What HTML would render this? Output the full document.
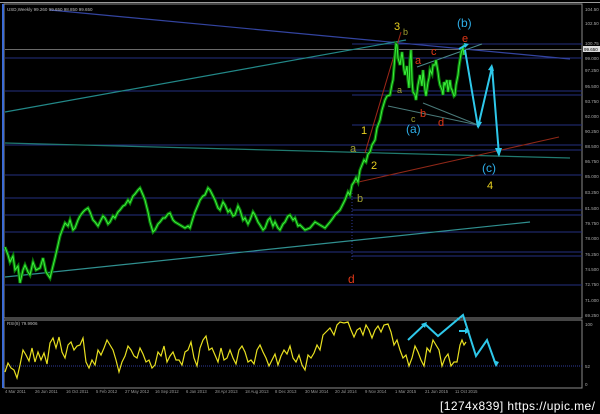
<!DOCTYPE html>
<html><head><meta charset="utf-8"><style>
html,body{margin:0;padding:0;background:#000;width:600px;height:414px;overflow:hidden}
svg{display:block}
text{font-family:"Liberation Sans",sans-serif}
</style></head><body>
<svg width="600" height="414" viewBox="0 0 600 414" xmlns="http://www.w3.org/2000/svg">
<defs>
<polyline id="px" fill="none" points="5,247 8,255 10,262 13,256 15,270 18,266 20,283 23,270 25,265 28,272 30,275 33,262 36,270 40,268 43,258 46,272 50,278 53,266 55,258 58,245 60,236 63,228 65,223 68,226 70,220 73,230 75,228 78,220 80,216 83,212 85,210 88,208 90,212 93,220 95,222 98,226 100,222 103,216 105,218 108,224 110,222 113,216 115,218 118,212 120,210 123,206 125,205 128,200 130,203 133,196 135,194 138,190 140,188 143,195 145,200 148,212 150,222 153,232 155,230 158,224 160,222 163,218 165,218 168,214 170,213 173,220 175,222 180,225 185,228 188,226 190,228 193,218 195,212 198,205 200,200 203,196 205,195 208,188 210,190 213,196 215,200 218,208 220,210 223,202 225,205 228,212 230,210 233,216 235,215 238,206 240,210 243,220 245,218 248,224 250,220 253,212 255,215 258,222 260,225 263,230 265,228 268,220 270,218 273,226 275,222 278,228 280,230 283,224 285,222 288,216 290,215 293,220 295,218 298,226 300,225 305,230 310,228 315,222 320,225 325,228 330,222 333,218 335,215 338,212 340,210 343,204 345,200 348,192 350,195 352,185 354,182 356,178 358,182 360,170 362,165 364,160 366,162 368,154 370,152 372,145 375,140 377,128 380,120 382,110 385,100 387,96 390,95 392,84 393,80 394,68 395,55 396,44 397,45 398,58 400,65 402,52 403,60 404,70 405,75 407,66 408,80 409,88 410,60 411,50 412,80 413,92 415,95 416,100 418,85 419,80 420,75 422,86 423,70 424,80 425,90 426,96 428,82 429,78 430,70 432,74 433,65 435,65 436,60 438,72 439,80 440,85 442,90 443,95 444,82 445,85 447,80 448,92 449,86 450,80 451,88 452,90 454,96 455,95 456,85 458,75 459,66 460,60 461,54 462,50 463,48 464,55"/>
</defs>
<rect width="600" height="414" fill="#000"/>
<rect x="4" y="4" width="578" height="314" fill="none" stroke="#8a8a8a" stroke-width="1"/>
<rect x="4" y="320" width="578" height="68" fill="none" stroke="#8a8a8a" stroke-width="1"/>
<line x1="3" y1="4" x2="3" y2="388" stroke="#3b6bd6" stroke-width="2"/>
<line x1="0" y1="2.5" x2="600" y2="2.5" stroke="#9a9a9a"/>
<g stroke="#252f80" stroke-width="1">
<line x1="352" y1="44" x2="582" y2="44"/>
<line x1="5" y1="58" x2="582" y2="58"/>
<line x1="5" y1="91" x2="582" y2="91"/>
<line x1="352" y1="95" x2="582" y2="95"/>
<line x1="352" y1="125" x2="582" y2="125"/>
<line x1="5" y1="145" x2="582" y2="145"/>
<line x1="352" y1="150" x2="582" y2="150"/>
<line x1="5" y1="175" x2="582" y2="175"/>
<line x1="5" y1="198" x2="582" y2="198"/>
<line x1="352" y1="210" x2="582" y2="210"/>
<line x1="5" y1="215" x2="582" y2="215"/>
<line x1="5" y1="232" x2="582" y2="232"/>
<line x1="5" y1="252" x2="582" y2="252"/>
<line x1="352" y1="256" x2="582" y2="256"/>
<line x1="5" y1="285" x2="582" y2="285"/>
</g>
<line x1="5" y1="49.5" x2="582" y2="49.5" stroke="#6a6a6a" stroke-width="1"/>
<line x1="352" y1="190" x2="352" y2="260" stroke="#2f3c9a" stroke-dasharray="1,2"/>
<line x1="50" y1="10" x2="570" y2="59" stroke="#3344a0" stroke-width="1.2"/>
<line x1="5" y1="112" x2="406" y2="40" stroke="#228888" stroke-width="1.2"/>
<line x1="5" y1="143" x2="570" y2="158" stroke="#207a70" stroke-width="1.2"/>
<line x1="5" y1="277" x2="530" y2="222" stroke="#309090" stroke-width="1.2"/>
<line x1="365" y1="153" x2="401" y2="32" stroke="#a02818" stroke-width="1"/>
<line x1="354" y1="183" x2="559" y2="137" stroke="#902818" stroke-width="1"/>
<line x1="388" y1="106" x2="478" y2="125" stroke="#4a7a7a" stroke-width="1"/>
<line x1="423" y1="103" x2="478" y2="125" stroke="#4a7a7a" stroke-width="1"/>
<line x1="417" y1="67" x2="482" y2="44" stroke="#4a8a8a" stroke-width="1"/>
<use href="#px" stroke="#0a7a0a" stroke-width="3.2"/>
<use href="#px" stroke="#3cf03c" stroke-width="1"/>
<polyline fill="none" stroke="#2ec8ea" stroke-width="2" points="465,50 478,127 492,67 499,155"/>
<polygon points="476,121 478,129 482,122" fill="#2ec8ea"/>
<polygon points="488,70 492,64 494,71" fill="#2ec8ea"/>
<polygon points="495,148 499,157 502,148" fill="#2ec8ea"/>
<line x1="459" y1="49" x2="466" y2="45" stroke="#2ec8ea" stroke-width="2"/>
<polygon points="464,43 469,44 465,48" fill="#2ec8ea"/>
<g font-size="11">
<text x="394" y="30" fill="#e8d020">3</text>
<text x="403" y="35" fill="#a0a030" font-size="9">b</text>
<text x="415" y="64" fill="#e03818">a</text>
<text x="431" y="55" fill="#e03818">c</text>
<text x="462" y="42" fill="#e03818">e</text>
<text x="457" y="27" fill="#2eaee8" font-size="12">(b)</text>
<text x="397" y="93" fill="#a0a030" font-size="9">a</text>
<text x="411" y="122" fill="#a0a030" font-size="9">c</text>
<text x="420" y="117" fill="#e03818">b</text>
<text x="438" y="126" fill="#e03818">d</text>
<text x="406" y="133" fill="#2eaee8" font-size="12">(a)</text>
<text x="361" y="134" fill="#e8d020">1</text>
<text x="350" y="152" fill="#a0a030">a</text>
<text x="371" y="169" fill="#e8d020">2</text>
<text x="482" y="172" fill="#2eaee8" font-size="12">(c)</text>
<text x="487" y="189" fill="#e8d020">4</text>
<text x="357" y="202" fill="#a0a030">b</text>
<text x="348" y="283" fill="#e03818" font-size="12">d</text>
</g>
<text x="7" y="11" fill="#bbb" font-size="4.5">USD,Weekly  99.260 99.650 98.850 99.650</text>
<g fill="#aaa" font-size="4.5">
<text x="585" y="11">104.50</text><text x="585" y="25">102.50</text><text x="585" y="45">100.75</text>
<text x="585" y="60">99.000</text><text x="585" y="72">97.250</text><text x="585" y="88">95.500</text>
<text x="585" y="103">93.750</text><text x="585" y="118">92.000</text><text x="585" y="133">90.250</text>
<text x="585" y="148">88.500</text><text x="585" y="163">86.750</text><text x="585" y="178">85.000</text>
<text x="585" y="194">83.250</text><text x="585" y="210">81.500</text><text x="585" y="225">79.750</text>
<text x="585" y="240">78.000</text><text x="585" y="256">76.250</text><text x="585" y="271">74.500</text>
<text x="585" y="286">72.750</text><text x="585" y="302">71.000</text><text x="585" y="317">69.250</text>
<text x="585" y="326">100</text><text x="585" y="368">52</text><text x="585" y="386">0</text>
</g>
<rect x="583" y="46" width="17" height="6" fill="#ddd"/>
<text x="584" y="51" fill="#000" font-size="4.5">99.650</text>
<text x="7" y="325" fill="#bbb" font-size="4.5">RSI(8) 79.9906</text>
<line x1="5" y1="366" x2="582" y2="366" stroke="#2f3c9a" stroke-dasharray="1,1"/>
<polyline fill="none" stroke="#e8e020" stroke-width="1.2" points="5,372 8,363 11,368 14,370 17,378 20,365 23,350 26,355 29,361 32,348 35,362 38,352 41,360 44,353 47,364 50,343 53,338 56,348 59,337 62,352 65,358 68,345 71,342 74,350 77,346 80,345 83,338 86,362 89,368 92,360 95,365 98,350 101,355 104,348 107,340 110,345 113,350 116,360 119,372 122,362 125,356 128,346 131,350 134,356 137,358 140,348 143,354 146,362 149,360 152,368 155,365 158,352 161,356 164,346 167,362 170,356 173,352 176,360 179,360 182,365 185,352 188,350 191,342 194,358 197,366 200,348 203,340 206,336 209,350 212,348 215,355 218,362 221,348 224,360 227,358 230,350 233,358 236,364 239,350 242,346 245,352 248,362 251,360 254,364 257,350 260,345 263,352 266,358 269,366 272,360 275,354 278,365 281,356 284,350 287,354 290,346 293,358 296,362 299,355 302,365 305,370 308,355 311,358 314,353 317,345 320,350 323,335 326,332 330,328 334,335 337,325 340,322 344,323 348,322 351,330 354,337 357,330 360,328 363,335 366,325 369,330 372,338 375,330 378,326 381,332 384,325 388,324 391,332 394,345 397,340 400,350 403,358 406,355 409,366 412,358 415,346 418,352 421,360 424,366 427,348 430,352 433,340 436,345 439,350 442,366 445,358 448,354 451,366 454,362 457,362 460,345 462,340 464,345 466,342"/>
<polyline fill="none" stroke="#2ec8ea" stroke-width="2" points="408,340 425,324 438,336 463,315 476,356 487,340 496,365"/>
<polygon points="421,324 427,322 425,328" fill="#2ec8ea"/>
<polygon points="493,360 496,367 499,362" fill="#2ec8ea"/>
<line x1="459" y1="331" x2="466" y2="331" stroke="#2ec8ea" stroke-width="2"/>
<polygon points="465,328 470,331 465,334" fill="#2ec8ea"/>
<g fill="#999" font-size="4.2">
<text x="5" y="393">4 Mar 2011</text><text x="35" y="393">26 Jun 2011</text><text x="66" y="393">16 Oct 2011</text>
<text x="96" y="393">5 Feb 2012</text><text x="125" y="393">27 May 2012</text><text x="155" y="393">16 Sep 2012</text>
<text x="186" y="393">6 Jan 2013</text><text x="215" y="393">28 Apr 2013</text><text x="245" y="393">18 Aug 2013</text>
<text x="275" y="393">8 Dec 2013</text><text x="305" y="393">30 Mar 2014</text><text x="335" y="393">20 Jul 2014</text>
<text x="365" y="393">9 Nov 2014</text><text x="395" y="393">1 Mar 2015</text><text x="425" y="393">21 Jun 2015</text>
<text x="455" y="393">11 Oct 2015</text>
</g>
<text x="440" y="410" fill="#fff" font-size="12" textLength="155">[1274x839] https://upic.me/</text>
</svg>
</body></html>
